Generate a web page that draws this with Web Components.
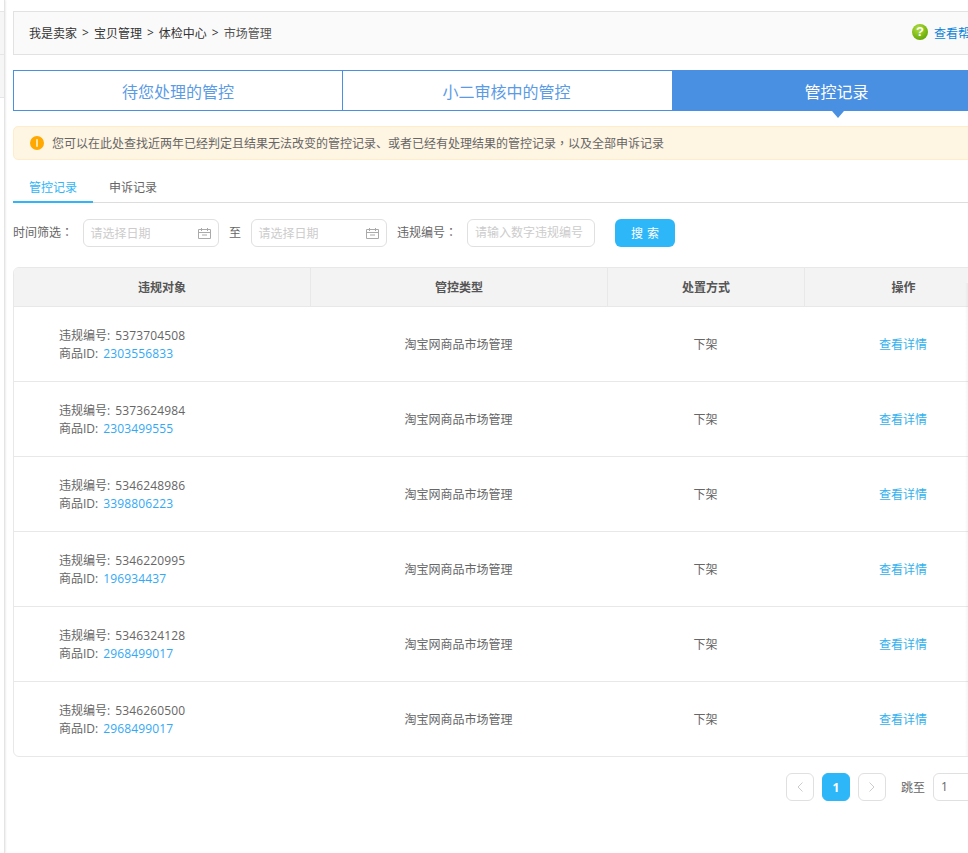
<!DOCTYPE html>
<html lang="zh-CN">
<head>
<meta charset="utf-8">
<title>管控记录</title>
<style>
  html, body { margin: 0; height: 100%; overflow: hidden; background: #fff; }
  body {
    font: 12px "Open Sans", "Noto Sans CJK SC", sans-serif;
    color: #666;
  }
  .tc { font-family: "Noto Sans CJK TC", sans-serif; }
</style>
</head>
<body>
<seller-page>
  <crumb-bar></crumb-bar>
  <record-tabs></record-tabs>
  <notice-bar>您可以在此处查找近两年已经判定且结果无法改变的管控记录、或者已经有处理结果的管控记录<span class="tc" lang="zh-TW">，</span>以及全部申诉记录</notice-bar>
  <sub-tabs></sub-tabs>
  <filter-bar></filter-bar>
  <record-table>
    <record-row code="5373704508" item="2303556833"></record-row>
    <record-row code="5373624984" item="2303499555"></record-row>
    <record-row code="5346248986" item="3398806223"></record-row>
    <record-row code="5346220995" item="196934437"></record-row>
    <record-row code="5346324128" item="2968499017"></record-row>
    <record-row code="5346260500" item="2968499017"></record-row>
  </record-table>
  <page-nav></page-nav>
</seller-page>

<script>
class SellerPage extends HTMLElement {
  connectedCallback() {
    this.attachShadow({ mode: 'open' }).innerHTML = `
      <style>
        :host { display: flex; width: 1003px; height: 853px; }
        .side { width: 5px; flex: none; box-sizing: border-box; padding-top: 11px;
          border-right: 1px solid #e4e4e4; box-shadow: 1px 0 2px #eee; }
        .side i { display: block; box-sizing: border-box; height: 43px; background: #f6f6f6;
          border-top: 1px solid #e6e6e6; }
        .side i:last-child { border-bottom: 1px solid #e6e6e6; height: 44px; }
        main { width: 990px; margin-left: 8px; padding-top: 11px; flex: none; }
      </style>
      <div class="side"><i></i><i></i></div>
      <main><slot></slot></main>`;
  }
}

class CrumbBar extends HTMLElement {
  connectedCallback() {
    this.attachShadow({ mode: 'open' }).innerHTML = `
      <style>
        :host { display: flex; align-items: center; justify-content: space-between; box-sizing: border-box;
          height: 44px; padding: 0 20px 0 15px; background: #fafafa; border: 1px solid #e2e2e2; color: #333; }
        .path { display: flex; gap: 5px; }
        .path span:last-child { color: #555; }
        .help { display: flex; align-items: center; gap: 6px; margin-top: -2px; }
        .help a { color: #0b84d8; white-space: nowrap; margin-top: 2px; }
        .ball { width: 16px; height: 16px; border-radius: 50%; color: #fff; font: bold 13px/16px "Liberation Sans", sans-serif;
          text-align: center; background: radial-gradient(circle at 40% 30%, #b4e03c, #6cae0c 70%, #4f8f06); }
      </style>
      <div class="path"><span>我是卖家</span><span>&gt;</span><span>宝贝管理</span><span>&gt;</span><span>体检中心</span><span>&gt;</span><span>市场管理</span></div>
      <div class="help"><span class="ball">?</span><a>查看帮助</a></div>`;
  }
}

class RecordTabs extends HTMLElement {
  connectedCallback() {
    this.attachShadow({ mode: 'open' }).innerHTML = `
      <style>
        :host { display: grid; grid-template-columns: 328px 330px 330px; box-sizing: border-box; height: 41px;
          margin-top: 15px; border: 1px solid #4a90e2; font-size: 16px; color: #5b9be6; }
        div { display: flex; align-items: center; justify-content: center; position: relative; }
        div + div { border-left: 1px solid #4a90e2; padding-right: 2px; }
        .on { background: #4a90e2; color: #fff; margin: -1px 0; }
        .on::after { content: ""; position: absolute; left: 159px; top: 100%; border: 6px solid transparent;
          border-top: 7px solid #4a90e2; border-bottom: 0; }
      </style>
      <div>待您处理的管控</div><div>小二审核中的管控</div><div class="on">管控记录</div>`;
  }
}

class NoticeBar extends HTMLElement {
  connectedCallback() {
    this.attachShadow({ mode: 'open' }).innerHTML = `
      <style>
        :host { display: flex; align-items: center; gap: 8px; box-sizing: border-box; height: 34px;
          margin-top: 15px; padding: 0 16px; background: #fff5e3; border: 1px solid #ffeccb; border-radius: 5px; color: #666; }
        svg { flex: none; }
      </style>
      <svg width="14" height="14" viewBox="0 0 14 14"><circle cx="7" cy="7" r="7" fill="#ffa800"/><rect x="6.2" y="3.2" width="1.6" height="7.6" fill="#fff3cf"/></svg>
      <span><slot></slot></span>`;
  }
}

class SubTabs extends HTMLElement {
  connectedCallback() {
    this.attachShadow({ mode: 'open' }).innerHTML = `
      <style>
        :host { display: flex; height: 33px; margin-top: 10px; box-sizing: border-box; border-bottom: 1px solid #ddd; }
        div { width: 80px; text-align: center; line-height: 36px; height: 33px; box-sizing: border-box; color: #666; }
        .on { color: #2fb5f8; border-bottom: 2px solid #2fb5f8; }
      </style>
      <div class="on">管控记录</div><div>申诉记录</div>`;
  }
}

class DateInput extends HTMLElement {
  connectedCallback() {
    this.attachShadow({ mode: 'open' }).innerHTML = `
      <style>
        :host { display: flex; align-items: center; justify-content: space-between; box-sizing: border-box;
          width: 136px; height: 28px; padding: 0 7px; background: #fff; border: 1px solid #e0e0e0; border-radius: 6px; color: #ccc; }
        span { margin-left: -.5px; }
      </style>
      <span>请选择日期</span>
      <svg width="13" height="11" viewBox="0 0 13 11" fill="none" stroke="#aaa"><path d="M.5 1.5h12v9H.5zM.5 4.5h12M3.5 0v3M9.5 0v3M4 7h5"/></svg>`;
  }
}

class FilterBar extends HTMLElement {
  connectedCallback() {
    this.attachShadow({ mode: 'open' }).innerHTML = `
      <style>
        :host { display: flex; align-items: center; height: 28px; margin-top: 16px; color: #666; }
        .to { margin: 0 10px; padding-bottom: 2px; }
        .lab { width: 70px; flex: none; padding-bottom: 2px; }
        .lab b { font: 12px "Noto Sans CJK TC", sans-serif; }
        .num { margin-left: 10px; }
        .code { box-sizing: border-box; width: 128px; height: 28px; padding: 0 6px 0 7px; line-height: 26px; color: #ccc;
          border: 1px solid #e0e0e0; border-radius: 6px; white-space: nowrap; overflow: hidden; }
        button { width: 60px; height: 28px; margin-left: 20px; padding: 0; border: 0; border-radius: 6px; background: #2eb7f8;
          color: #fff; font: inherit; word-spacing: 1px; }
      </style>
      <span class="lab">时间筛选<b lang="zh-TW">：</b></span>
      <date-input></date-input>
      <span class="to">至</span>
      <date-input></date-input>
      <span class="lab num">违规编号<b lang="zh-TW">：</b></span>
      <div class="code">请输入数字违规编号</div>
      <button>搜 索</button>`;
  }
}

class RecordTable extends HTMLElement {
  connectedCallback() {
    this.attachShadow({ mode: 'open' }).innerHTML = `
      <style>
        :host { display: block; position: relative; box-sizing: border-box; margin-top: 20px; height: 490px;
          border: 1px solid #e8e8e8; border-radius: 6px; overflow: hidden; }
        .head { display: grid; grid-template-columns: 296px 297px 197px 1fr; height: 39px; box-sizing: border-box;
          background: #f3f3f3; border-bottom: 1px solid #e8e8e8; font-weight: 700; color: #555; }
        .head div { display: flex; align-items: center; justify-content: center; }
        .head div + div { border-left: 1px solid #e8e8e8; }
        .edge { position: absolute; left: 951px; top: 15px; bottom: 0; width: 4px;
          background: linear-gradient(90deg, rgba(0,0,0,0), rgba(0,0,0,.06)); }
      </style>
      <div class="head"><div>违规对象</div><div>管控类型</div><div>处置方式</div><div>操作</div></div>
      <slot></slot>
      <div class="edge"></div>`;
  }
}

class RecordRow extends HTMLElement {
  connectedCallback() {
    this.attachShadow({ mode: 'open' }).innerHTML = `
      <style>
        :host { display: grid; grid-template-columns: 296px 297px 197px 1fr; align-items: center; box-sizing: border-box;
          height: 75px; border-bottom: 1px solid #e8e8e8; color: #666; }
        :host(:last-child) { border-bottom: 0; height: 74px; }
        .obj { padding: 2px 0 0 45px; line-height: 18px; }
        .obj p { margin: 0; white-space: nowrap; }
        .obj span { margin-left: 2px; letter-spacing: .14px; }
        .obj a { color: #33a9f5; }
        .mid { text-align: center; }
        .go { color: #33b1ee; text-align: center; }
      </style>
      <div class="obj"><p>违规编号: <span>${this.getAttribute('code')}</span></p><p>商品ID: <span><a>${this.getAttribute('item')}</a></span></p></div>
      <div class="mid">淘宝网商品市场管理</div>
      <div class="mid">下架</div>
      <div class="go">查看详情</div>`;
  }
}

class PageNav extends HTMLElement {
  connectedCallback() {
    this.attachShadow({ mode: 'open' }).innerHTML = `
      <style>
        :host { display: flex; align-items: center; height: 28px; margin-top: 16px; padding-left: 773px; color: #666; }
        .b { box-sizing: border-box; flex: none; display: flex; align-items: center; justify-content: center; width: 28px; height: 28px;
          border: 1px solid #e0e0e0; border-radius: 6px; }
        .b + .b { margin-left: 8px; }
        .cur { background: #2eb7f8; border-color: #2eb7f8; color: #fff; font-weight: 700; }
        .jump { margin: 0 8px 0 15px; white-space: nowrap; }
        .in { box-sizing: border-box; flex: none; width: 60px; height: 28px; line-height: 26px; padding-left: 7px;
          border: 1px solid #e0e0e0; border-radius: 6px; }
        svg { fill: none; stroke: #ccc; }
      </style>
      <div class="b"><svg width="6" height="10" viewBox="0 0 6 10"><path d="M5.5.5 1 5l4.5 4.5"/></svg></div>
      <div class="b cur">1</div>
      <div class="b"><svg width="6" height="10" viewBox="0 0 6 10"><path d="M.5.5 5 5 .5 9.5"/></svg></div>
      <span class="jump">跳至</span>
      <div class="in">1</div>`;
  }
}

customElements.define('seller-page', SellerPage);
customElements.define('crumb-bar', CrumbBar);
customElements.define('record-tabs', RecordTabs);
customElements.define('notice-bar', NoticeBar);
customElements.define('sub-tabs', SubTabs);
customElements.define('date-input', DateInput);
customElements.define('filter-bar', FilterBar);
customElements.define('record-table', RecordTable);
customElements.define('record-row', RecordRow);
customElements.define('page-nav', PageNav);
</script>
</body>
</html>
